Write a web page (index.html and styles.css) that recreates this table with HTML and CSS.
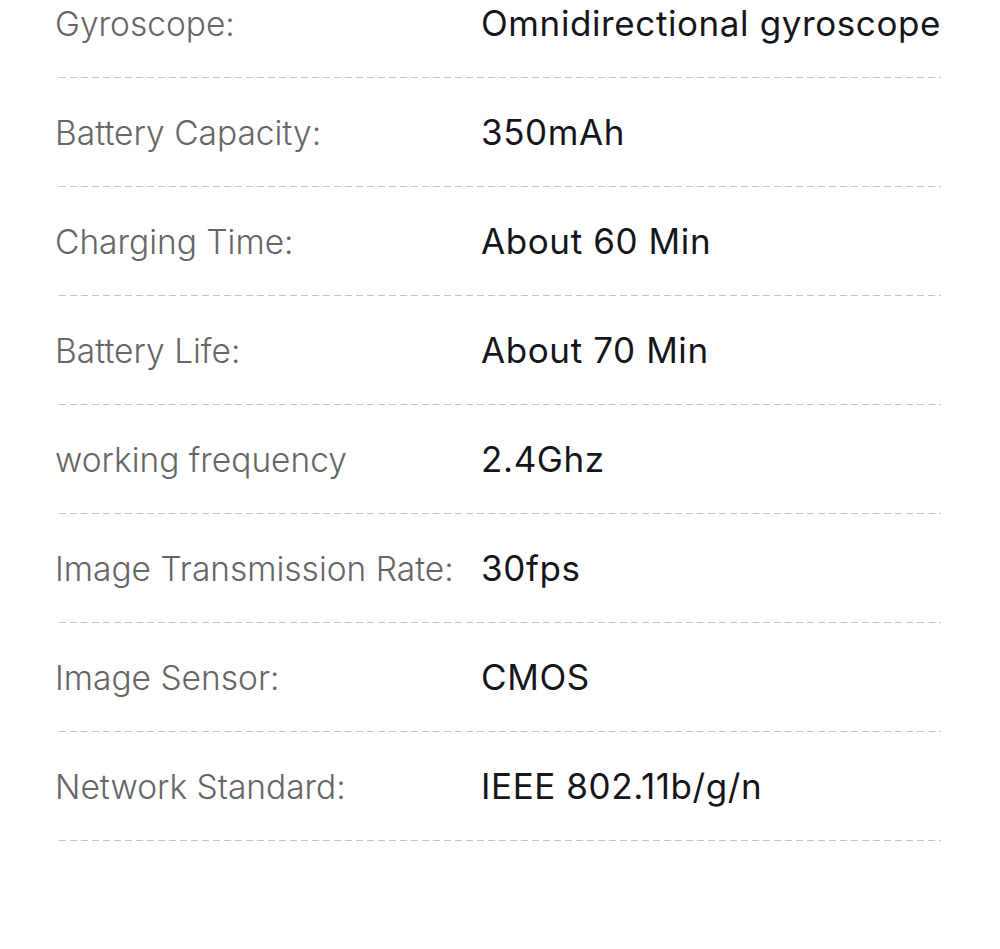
FILE: index.html
```html
<!DOCTYPE html>
<html lang="en">
<head>
<meta charset="utf-8">
<title>Specifications</title>
<link rel="stylesheet" href="styles.css">
</head>
<body>
<div class="specs">
  <div class="row"><span class="label">Gyroscope:</span><span class="value">Omnidirectional gyroscope</span></div>
  <div class="row"><span class="label">Battery Capacity:</span><span class="value">350mAh</span></div>
  <div class="row"><span class="label">Charging Time:</span><span class="value">About 60 Min</span></div>
  <div class="row"><span class="label">Battery Life:</span><span class="value">About 70 Min</span></div>
  <div class="row"><span class="label">working frequency</span><span class="value">2.4Ghz</span></div>
  <div class="row"><span class="label">Image Transmission Rate:</span><span class="value">30fps</span></div>
  <div class="row"><span class="label">Image Sensor:</span><span class="value">CMOS</span></div>
  <div class="row"><span class="label">Network Standard:</span><span class="value">IEEE 802.11b/g/n</span></div>
</div>
</body>
</html>
```
FILE: styles.css
```css
html, body {
  margin: 0;
  padding: 0;
  background: #ffffff;
}

body {
  width: 1000px;
  height: 949px;
  overflow: hidden;
  font-family: Inter, "Noto Sans", sans-serif;
}

.specs {
  display: flex;
  flex-direction: column;
  padding: 0 55px;
}

.row {
  display: grid;
  grid-template-columns: 426px 1fr;
  align-items: baseline;
  padding: 32px 0 32px;
  line-height: 44px;
  background-image: repeating-linear-gradient(to right, #c4c4c4 0 7px, transparent 7px 11px);
  background-size: 882px 1px;
  background-position: 4px 100%;
  background-repeat: no-repeat;
}

.row:first-child {
  padding-top: 1px;
}

.label {
  color: #666666;
  font-size: 33.5px;
  font-weight: 300;
  white-space: nowrap;
}

.value {
  color: #15161c;
  font-size: 35px;
  font-weight: 400;
  letter-spacing: 0.6px;
  white-space: nowrap;
}
```
